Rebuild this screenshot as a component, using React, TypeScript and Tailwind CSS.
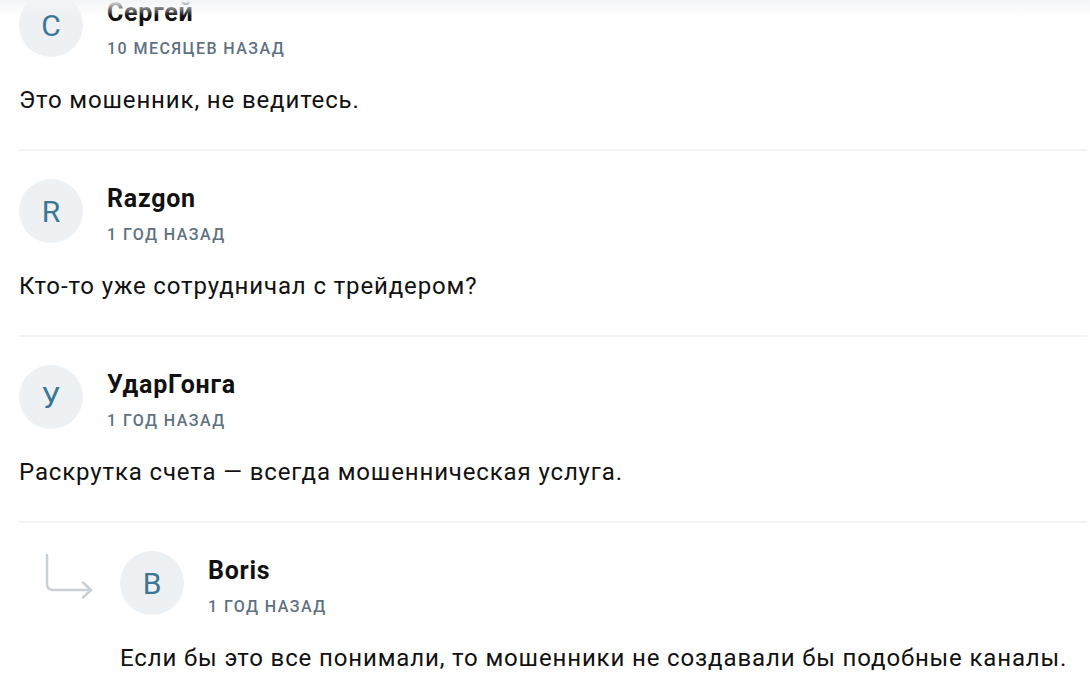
import React from 'react';

type Comment = {
    initial: string;
    name: string;
    date: string;
    text: string;
    reply?: boolean;
};

const comments: Comment[] = [
    { initial: 'С', name: 'Сергей', date: '10 месяцев назад', text: 'Это мошенник, не ведитесь.' },
    { initial: 'R', name: 'Razgon', date: '1 год назад', text: 'Кто-то уже сотрудничал с трейдером?' },
    { initial: 'У', name: 'УдарГонга', date: '1 год назад', text: 'Раскрутка счета — всегда мошенническая услуга.' },
    {
        initial: 'B',
        name: 'Boris',
        date: '1 год назад',
        text: 'Если бы это все понимали, то мошенники не создавали бы подобные каналы.',
        reply: true,
    },
];

const ReplyArrow = () => (
    <svg width="50" height="46" viewBox="0 0 50 46" fill="none" className="shrink-0">
        <path
            d="M3 2 V31 Q3 37 9 37 H47 M39 29.5 L47 37 L39 44.5"
            stroke="#c9d0d6"
            strokeWidth="2.5"
            strokeLinecap="round"
            strokeLinejoin="round"
        />
    </svg>
);

const CommentItem = ({ c }: { c: Comment }) => {
    return (
        <div className="flex flex-col">
            <div className="flex items-start h-16">
                {c.reply && (
                    <div className="w-[101px] pl-[25px] pt-[2px]">
                        <ReplyArrow />
                    </div>
                )}
                <div className="w-16 h-16 rounded-full bg-[#eef1f4] flex items-center justify-center text-[30px] text-[#3c7693] shrink-0">
                    {c.initial}
                </div>
                <div className="ml-6 pt-1 flex flex-col">
                    <div className="text-[25px] leading-8 font-bold tracking-[0.03em] text-[#111]">{c.name}</div>
                    <div className="mt-2 text-[16px] leading-6 font-medium uppercase tracking-[0.09em] text-[#5f7180]">
                        {c.date}
                    </div>
                </div>
            </div>
            <p className={`mt-[27px] text-[24px] leading-8 tracking-[0.036em] text-[#111] ${c.reply ? 'pl-[101px]' : ''}`}>
                {c.text}
            </p>
        </div>
    );
};

const App = () => {
    return (
        <div className="relative min-h-[694px] bg-white overflow-hidden font-['Roboto',sans-serif]">
            <div className="absolute top-0 left-0 w-full h-4 bg-gradient-to-b from-[#f3f4f6] to-white/0 pointer-events-none z-10"></div>
            <div className="pl-[19px] pr-[3px] -mt-[7px]">
                {comments.map((c, i) => (
                    <div key={i}>
                        <CommentItem c={c} />
                        {i < comments.length - 1 && <div className="h-[2px] bg-[#f2f3f4] mt-[33px] mb-[28px]"></div>}
                    </div>
                ))}
            </div>
        </div>
    );
};

export default App;
